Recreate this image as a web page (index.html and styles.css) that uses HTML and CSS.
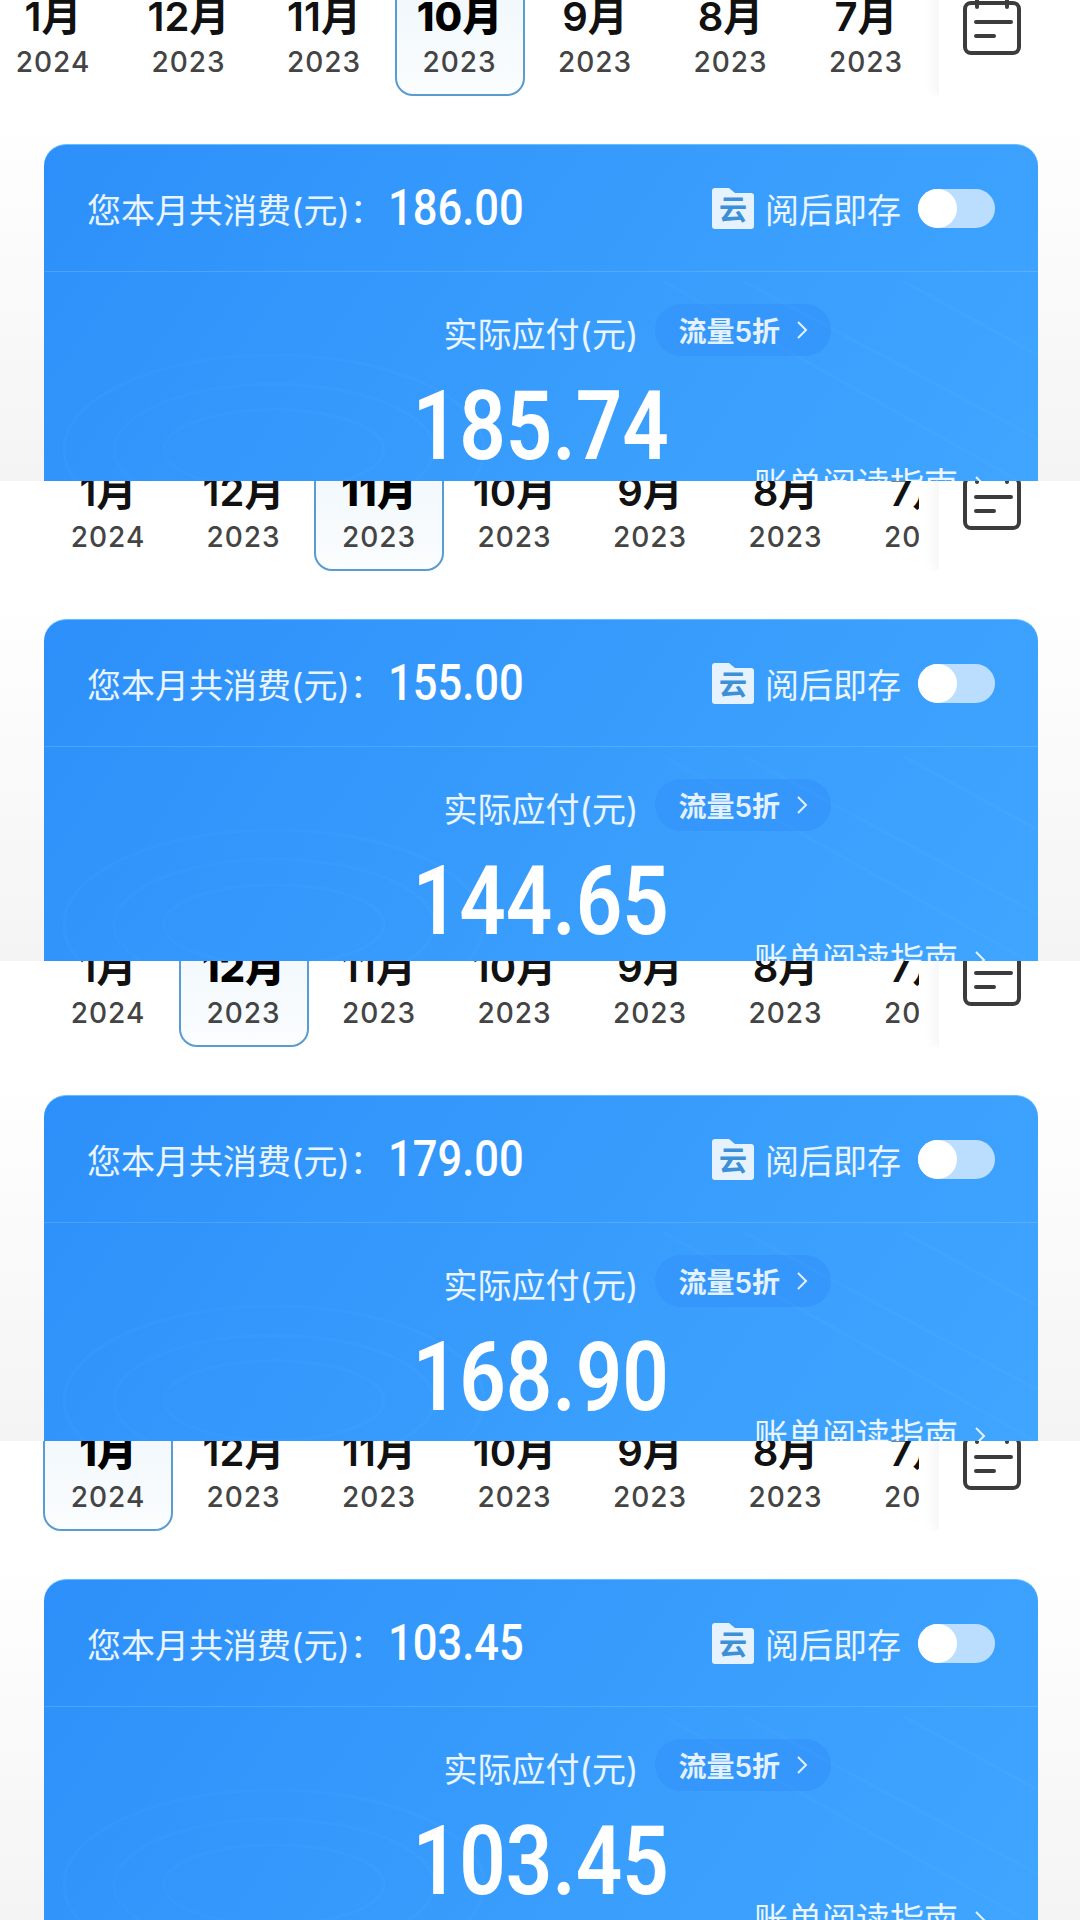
FILE: index.html
```html
<!DOCTYPE html>
<html lang="zh-CN">
<head>
    <meta charset="UTF-8">
    <meta name="viewport" content="width=device-width, initial-scale=1.0">
    <title>账单</title>
    <link rel="stylesheet" href="styles.css">
</head>
<body>

<!-- Strip 1: October 2023 -->
<section class="strip strip-first">
    <div class="page">
        <div class="month-bar">
            <div class="month-scroller scrolled">
                <div class="month-tab"><b>1月</b><span>2024</span></div>
                <div class="month-tab"><b>12月</b><span>2023</span></div>
                <div class="month-tab"><b>11月</b><span>2023</span></div>
                <div class="month-tab active"><b>10月</b><span>2023</span></div>
                <div class="month-tab"><b>9月</b><span>2023</span></div>
                <div class="month-tab"><b>8月</b><span>2023</span></div>
                <div class="month-tab"><b>7月</b><span>2023</span></div>
            </div>
            <div class="calendar-side">
                <svg class="calendar-icon" viewBox="0 0 60 66"><path d="M9 12h42a6 6 0 0 1 6 6v38a6 6 0 0 1-6 6H9a6 6 0 0 1-6-6V18a6 6 0 0 1 6-6zM15 3v13M45 3v13M14 31h35M14 45h18"/></svg>
            </div>
        </div>
        <div class="bill-card">
            <svg class="card-lines" viewBox="0 0 994 400" preserveAspectRatio="none"><ellipse cx="230" cy="290" rx="210" ry="90"/><ellipse cx="230" cy="290" rx="160" ry="62"/><ellipse cx="230" cy="290" rx="110" ry="38"/><path d="M620 130L994 330M700 130L994 280M860 130L994 200"/></svg>
            <div class="card-head">
                <span class="head-label">您本月共消费(元)：</span>
                <span class="head-total">186.00</span>
                <svg class="folder-icon" viewBox="0 0 42 41"><path d="M3 0h14l6 5h16a3 3 0 0 1 3 3v30a3 3 0 0 1-3 3H3a3 3 0 0 1-3-3V3a3 3 0 0 1 3-3z"/><text x="21" y="32">云</text></svg>
                <span class="save-label">阅后即存</span>
                <span class="toggle"><i></i></span>
            </div>
            <div class="pay-row">
                <span class="pay-label">实际应付(元)</span>
                <span class="discount-pill">流量5折<svg viewBox="0 0 12 20"><path d="M2 2l8 8-8 8"/></svg></span>
            </div>
            <div class="pay-amount"><span>185.74</span></div>
            <div class="guide-link">账单阅读指南<svg viewBox="0 0 12 20"><path d="M2 2l8 8-8 8"/></svg></div>
        </div>
    </div>
</section>

<!-- Strip 2: November 2023 -->
<section class="strip strip-second">
    <div class="page">
        <div class="month-bar">
            <div class="month-scroller">
                <div class="month-tab"><b>1月</b><span>2024</span></div>
                <div class="month-tab"><b>12月</b><span>2023</span></div>
                <div class="month-tab active"><b>11月</b><span>2023</span></div>
                <div class="month-tab"><b>10月</b><span>2023</span></div>
                <div class="month-tab"><b>9月</b><span>2023</span></div>
                <div class="month-tab"><b>8月</b><span>2023</span></div>
                <div class="month-tab"><b>7月</b><span>2023</span></div>
            </div>
            <div class="calendar-side">
                <svg class="calendar-icon" viewBox="0 0 60 66"><path d="M9 12h42a6 6 0 0 1 6 6v38a6 6 0 0 1-6 6H9a6 6 0 0 1-6-6V18a6 6 0 0 1 6-6zM15 3v13M45 3v13M14 31h35M14 45h18"/></svg>
            </div>
        </div>
        <div class="bill-card">
            <svg class="card-lines" viewBox="0 0 994 400" preserveAspectRatio="none"><ellipse cx="230" cy="290" rx="210" ry="90"/><ellipse cx="230" cy="290" rx="160" ry="62"/><ellipse cx="230" cy="290" rx="110" ry="38"/><path d="M620 130L994 330M700 130L994 280M860 130L994 200"/></svg>
            <div class="card-head">
                <span class="head-label">您本月共消费(元)：</span>
                <span class="head-total">155.00</span>
                <svg class="folder-icon" viewBox="0 0 42 41"><path d="M3 0h14l6 5h16a3 3 0 0 1 3 3v30a3 3 0 0 1-3 3H3a3 3 0 0 1-3-3V3a3 3 0 0 1 3-3z"/><text x="21" y="32">云</text></svg>
                <span class="save-label">阅后即存</span>
                <span class="toggle"><i></i></span>
            </div>
            <div class="pay-row">
                <span class="pay-label">实际应付(元)</span>
                <span class="discount-pill">流量5折<svg viewBox="0 0 12 20"><path d="M2 2l8 8-8 8"/></svg></span>
            </div>
            <div class="pay-amount"><span>144.65</span></div>
            <div class="guide-link">账单阅读指南<svg viewBox="0 0 12 20"><path d="M2 2l8 8-8 8"/></svg></div>
        </div>
    </div>
</section>

<!-- Strip 3: December 2023 -->
<section class="strip strip-third">
    <div class="page">
        <div class="month-bar">
            <div class="month-scroller">
                <div class="month-tab"><b>1月</b><span>2024</span></div>
                <div class="month-tab active"><b>12月</b><span>2023</span></div>
                <div class="month-tab"><b>11月</b><span>2023</span></div>
                <div class="month-tab"><b>10月</b><span>2023</span></div>
                <div class="month-tab"><b>9月</b><span>2023</span></div>
                <div class="month-tab"><b>8月</b><span>2023</span></div>
                <div class="month-tab"><b>7月</b><span>2023</span></div>
            </div>
            <div class="calendar-side">
                <svg class="calendar-icon" viewBox="0 0 60 66"><path d="M9 12h42a6 6 0 0 1 6 6v38a6 6 0 0 1-6 6H9a6 6 0 0 1-6-6V18a6 6 0 0 1 6-6zM15 3v13M45 3v13M14 31h35M14 45h18"/></svg>
            </div>
        </div>
        <div class="bill-card">
            <svg class="card-lines" viewBox="0 0 994 400" preserveAspectRatio="none"><ellipse cx="230" cy="290" rx="210" ry="90"/><ellipse cx="230" cy="290" rx="160" ry="62"/><ellipse cx="230" cy="290" rx="110" ry="38"/><path d="M620 130L994 330M700 130L994 280M860 130L994 200"/></svg>
            <div class="card-head">
                <span class="head-label">您本月共消费(元)：</span>
                <span class="head-total">179.00</span>
                <svg class="folder-icon" viewBox="0 0 42 41"><path d="M3 0h14l6 5h16a3 3 0 0 1 3 3v30a3 3 0 0 1-3 3H3a3 3 0 0 1-3-3V3a3 3 0 0 1 3-3z"/><text x="21" y="32">云</text></svg>
                <span class="save-label">阅后即存</span>
                <span class="toggle"><i></i></span>
            </div>
            <div class="pay-row">
                <span class="pay-label">实际应付(元)</span>
                <span class="discount-pill">流量5折<svg viewBox="0 0 12 20"><path d="M2 2l8 8-8 8"/></svg></span>
            </div>
            <div class="pay-amount"><span>168.90</span></div>
            <div class="guide-link">账单阅读指南<svg viewBox="0 0 12 20"><path d="M2 2l8 8-8 8"/></svg></div>
        </div>
    </div>
</section>

<!-- Strip 4: January 2024 -->
<section class="strip strip-fourth">
    <div class="page">
        <div class="month-bar">
            <div class="month-scroller">
                <div class="month-tab active"><b>1月</b><span>2024</span></div>
                <div class="month-tab"><b>12月</b><span>2023</span></div>
                <div class="month-tab"><b>11月</b><span>2023</span></div>
                <div class="month-tab"><b>10月</b><span>2023</span></div>
                <div class="month-tab"><b>9月</b><span>2023</span></div>
                <div class="month-tab"><b>8月</b><span>2023</span></div>
                <div class="month-tab"><b>7月</b><span>2023</span></div>
            </div>
            <div class="calendar-side">
                <svg class="calendar-icon" viewBox="0 0 60 66"><path d="M9 12h42a6 6 0 0 1 6 6v38a6 6 0 0 1-6 6H9a6 6 0 0 1-6-6V18a6 6 0 0 1 6-6zM15 3v13M45 3v13M14 31h35M14 45h18"/></svg>
            </div>
        </div>
        <div class="bill-card">
            <svg class="card-lines" viewBox="0 0 994 400" preserveAspectRatio="none"><ellipse cx="230" cy="290" rx="210" ry="90"/><ellipse cx="230" cy="290" rx="160" ry="62"/><ellipse cx="230" cy="290" rx="110" ry="38"/><path d="M620 130L994 330M700 130L994 280M860 130L994 200"/></svg>
            <div class="card-head">
                <span class="head-label">您本月共消费(元)：</span>
                <span class="head-total">103.45</span>
                <svg class="folder-icon" viewBox="0 0 42 41"><path d="M3 0h14l6 5h16a3 3 0 0 1 3 3v30a3 3 0 0 1-3 3H3a3 3 0 0 1-3-3V3a3 3 0 0 1 3-3z"/><text x="21" y="32">云</text></svg>
                <span class="save-label">阅后即存</span>
                <span class="toggle"><i></i></span>
            </div>
            <div class="pay-row">
                <span class="pay-label">实际应付(元)</span>
                <span class="discount-pill">流量5折<svg viewBox="0 0 12 20"><path d="M2 2l8 8-8 8"/></svg></span>
            </div>
            <div class="pay-amount"><span>103.45</span></div>
            <div class="guide-link">账单阅读指南<svg viewBox="0 0 12 20"><path d="M2 2l8 8-8 8"/></svg></div>
        </div>
    </div>
</section>

</body>
</html>
```

FILE: styles.css
```css
/* Four cropped screenshots of the same bill page stacked on top of each other */
body {
    margin: 0;
    width: 1080px;
    height: 1920px;
    overflow: hidden;
    font-family: Inter, "Noto Sans CJK SC", sans-serif;
}
.strip {
    height: 480px;
    overflow: hidden;
    background: linear-gradient(#ffffff 0, #ffffff 110px, #f4f4f4 100%);
}
.strip-first {
    height: 481px;
}
.page {
    margin-top: -40px;
}
.strip-first .page {
    margin-top: -34px;
}
.strip-third .page {
    margin-top: -44px;
}

/* Month selector */
.month-bar {
    display: flex;
    height: 130px;
}
.month-scroller {
    display: flex;
    flex: none;
    gap: 5.5px;
    width: 919px;
    box-sizing: border-box;
    padding-left: 43px;
    overflow: hidden;
}
.month-scroller.scrolled {
    padding-left: 0;
}
.month-scroller.scrolled .month-tab:first-child {
    margin-left: -12px;
}
.month-tab {
    display: flex;
    flex: none;
    flex-direction: column;
    align-items: center;
    width: 130px;
    box-sizing: border-box;
    padding-top: 28px;
    border: 2px solid transparent;
    border-radius: 0 0 18px 18px;
}
.month-tab b {
    height: 42px;
    font-size: 40px;
    font-weight: 600;
    line-height: 42px;
    color: #111111;
}
.month-tab span {
    margin-top: 6px;
    font-size: 28px;
    font-weight: 500;
    letter-spacing: 1px;
    line-height: 36px;
    color: #444444;
}
.month-tab.active {
    border-color: #5a9bd0;
    background: linear-gradient(#eef6fc, #fbfdfe);
}
.month-tab.active b {
    font-weight: 800;
    color: #000000;
}
.calendar-side {
    flex: 1;
    margin-left: 20px;
    padding: 25px 0 0 23px;
    background: #ffffff;
    box-shadow: -6px 0 10px rgba(0, 0, 0, 0.04);
    clip-path: inset(0 0 0 -20px);
}
.calendar-icon {
    display: block;
    width: 60px;
    height: 66px;
    fill: none;
    stroke: #3c3c3c;
    stroke-width: 4;
    stroke-linecap: round;
}

/* Blue bill card */
.bill-card {
    position: relative;
    width: 994px;
    height: 420px;
    margin: 48px 0 0 44px;
    border-top: 1px solid #62c0ff;
    border-radius: 22px 22px 0 0;
    overflow: hidden;
    color: #ffffff;
    background: linear-gradient(125deg, #2d90fa 0%, #3a9efd 60%, #40a6ff 100%);
}
.card-lines {
    position: absolute;
    top: 0;
    left: 0;
    width: 100%;
    height: 100%;
    fill: none;
    stroke: rgba(255, 255, 255, 0.025);
    stroke-width: 3;
}
.card-head {
    display: flex;
    align-items: center;
    height: 127px;
    box-sizing: border-box;
    padding: 0 43px;
    border-bottom: 1px solid rgba(255, 255, 255, 0.14);
}
.head-label {
    width: 301px;
    flex: none;
    font-size: 34px;
    color: #eaf5ff;
}
.head-total {
    font-family: Roboto, sans-serif;
    font-size: 50px;
    font-weight: 500;
    transform: scaleX(0.87);
    transform-origin: left;
}
.folder-icon {
    width: 42px;
    height: 41px;
    margin-left: auto;
    fill: #e6f3fe;
}
.folder-icon text {
    font-family: "Noto Sans CJK SC", sans-serif;
    font-size: 28px;
    font-weight: 700;
    text-anchor: middle;
    fill: #3d90d8;
}
.save-label {
    margin-left: 11px;
    font-size: 34px;
    color: #eaf5ff;
}
.toggle {
    width: 77px;
    height: 39px;
    margin-left: 17px;
    border-radius: 20px;
    background: rgba(255, 255, 255, 0.65);
}
.toggle i {
    display: block;
    width: 39px;
    height: 39px;
    border-radius: 50%;
    background: #ffffff;
}

.pay-row {
    display: grid;
    grid-template-columns: 1fr auto 1fr;
    align-items: center;
    margin-top: 31px;
}
.pay-label {
    grid-column: 2;
    margin-top: 5px;
    font-size: 34px;
    color: #eaf5ff;
}
.discount-pill {
    display: flex;
    align-items: center;
    justify-self: start;
    height: 52px;
    box-sizing: border-box;
    margin-left: 17px;
    padding: 0 23px;
    border-radius: 26px;
    font-size: 28px;
    font-weight: 600;
    color: #e4f2ff;
    background: #3597fb;
}
.discount-pill svg, .guide-link svg {
    width: 12px;
    height: 20px;
    margin-left: 16px;
    fill: none;
    stroke: #e4f2ff;
    stroke-width: 2;
}
.pay-amount {
    margin-top: 14px;
    font-family: Roboto, sans-serif;
    font-size: 96px;
    font-weight: 600;
    line-height: 110px;
    text-align: center;
}
.pay-amount span {
    display: inline-block;
    transform: scaleX(0.85);
}
.guide-link {
    display: flex;
    align-items: center;
    justify-content: flex-end;
    margin-top: -19px;
    padding-right: 52px;
    font-size: 34px;
    line-height: 46px;
    color: #eaf5ff;
}
```
